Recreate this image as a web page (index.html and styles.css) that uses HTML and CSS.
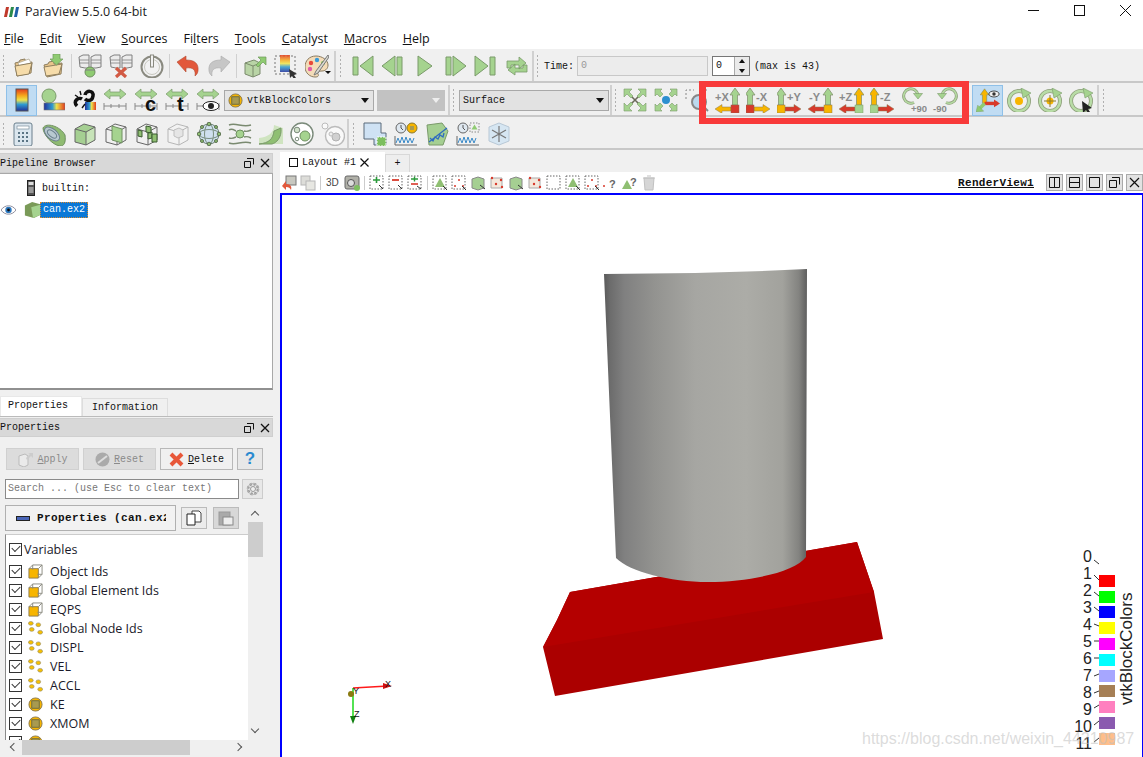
FILE: index.html
```html
<!DOCTYPE html>
<html lang="en">
<head>
<meta charset="utf-8">
<title>ParaView 5.5.0 64-bit</title>
<link rel="stylesheet" href="styles.css">
</head>
<body>
<svg class="defs" width="0" height="0" aria-hidden="true">
<defs>
<linearGradient id="rainbow" x1="0" y1="0" x2="0" y2="1"><stop offset="0" stop-color="#e23b1e"/><stop offset=".3" stop-color="#f6a81c"/><stop offset=".5" stop-color="#eee24a"/><stop offset=".7" stop-color="#2f9bd0"/><stop offset="1" stop-color="#20309a"/></linearGradient>
<linearGradient id="rainbowx" x1="0" y1="0" x2="1" y2="0"><stop offset="0" stop-color="#20309a"/><stop offset=".4" stop-color="#2f9bd0"/><stop offset=".6" stop-color="#eee24a"/><stop offset="1" stop-color="#e23b1e"/></linearGradient>
<linearGradient id="cyl" x1="0" y1="0" x2="1" y2="0"><stop offset="0" stop-color="#5a5a5a"/><stop offset=".03" stop-color="#6c6c6c"/><stop offset=".1" stop-color="#808080"/><stop offset=".25" stop-color="#939390"/><stop offset=".45" stop-color="#a6a6a2"/><stop offset=".7" stop-color="#acaca7"/><stop offset=".88" stop-color="#a2a29d"/><stop offset=".96" stop-color="#838380"/><stop offset="1" stop-color="#5e5e5e"/></linearGradient>
<polygon id="up" points="0,0 5,7 2.5,7 2.5,17 -2.5,17 -2.5,7 -5,7" stroke="#7d8a68" stroke-width=".7"/>
<polygon id="la" points="0,4.5 7,0 7,2.5 16,2.5 16,6.5 7,6.5 7,9" stroke="#8a7a50" stroke-width=".5"/>
<polygon id="ra" points="16,4.5 9,0 9,2.5 0,2.5 0,6.5 9,6.5 9,9" stroke="#8a7a50" stroke-width=".5"/>

<symbol id="folder" viewBox="0 0 24 24"><path d="M4 9l4-1 1-2 5-1v4l7-1-1 11-14 3z" fill="#e8c58c" stroke="#8f7f5f"/><path d="M7 9l11-4 2 4-12 3z" fill="#fff" stroke="#a9a08a" stroke-width=".7"/><path d="M4 12l17-3-3 11-12 2z" fill="#f6dcaa" stroke="#8f7f5f"/></symbol>
<symbol id="folderdl" viewBox="0 0 24 24"><path d="M2 11l4-1 1-2 5-1v3l8-1-1 11-14 3z" fill="#e8c58c" stroke="#8f7f5f"/><path d="M2 13l18-3-3 10-13 2z" fill="#f6dcaa" stroke="#8f7f5f"/><path d="M11 0h7v5h3l-6.500 6-6.500-6h3z" fill="#8fcb72" stroke="#6e9a5a" stroke-width=".7"/></symbol>
<symbol id="server" viewBox="0 0 24 24"><g fill="#ececec" stroke="#808080"><path d="M1 3l4-2h6v13H7l-5-1zM13 3l4-2h6v12l-5 1h-5z"/><path d="M1 6h10M1 9h10M13 6h10M13 9h10" stroke-width=".8"/></g><circle cx="12" cy="18" r="5" fill="#8fcb72" stroke="#6e8f60"/><path d="M7 16h10" stroke="#808080"/></symbol>
<symbol id="serverx" viewBox="0 0 24 24"><g fill="#ececec" stroke="#808080"><path d="M1 3l4-2h6v13H7l-5-1zM13 3l4-2h6v12l-5 1h-5z"/><path d="M1 6h10M1 9h10M13 6h10M13 9h10" stroke-width=".8"/></g><path d="M7 14l10 9M17 14L7 23" stroke="#d25a44" stroke-width="3.200"/></symbol>
<symbol id="power" viewBox="0 0 24 24"><circle cx="12" cy="13" r="10.500" fill="#f2f2f2" stroke="#8a8a80" stroke-width="2"/><circle cx="12" cy="13" r="7.500" fill="none" stroke="#c8c8c0" stroke-width="1"/><rect x="10.500" y="1" width="3" height="12" fill="#f2f2f2" stroke="#8a8a80"/></symbol>
<symbol id="undo" viewBox="0 0 24 24"><path d="M1 8l9-6v4c8 0 13 3 12 11-.5 3-2 4-3 5 1-6-2-9-9-8v4z" fill="#e2583b" stroke="#b04a30" stroke-width=".6"/></symbol>
<symbol id="redo" viewBox="0 0 24 24"><path d="M23 8l-9-6v4C6 6 1 9 2 17c.5 3 2 4 3 5-1-6 2-9 9-8v4z" fill="#c6c6c6" stroke="#a8a8a8" stroke-width=".6"/></symbol>
<symbol id="cubeup" viewBox="0 0 24 24"><path d="M2 9l9-3 6 3v11l-7 3-8-3z" fill="#b9d4a6" stroke="#7a8a6c"/><path d="M10 12v11M2 9l8 3 7-3" stroke="#7a8a6c" fill="none"/><path d="M13 11l5-5-3-3h8v8l-3-3-5 5z" fill="#8fcb72" stroke="#6e9a5a" stroke-width=".7"/></symbol>
<symbol id="colorsel" viewBox="0 0 24 24"><rect x="1" y="2" width="20" height="18" fill="none" stroke="#777" stroke-dasharray="2 2"/><rect x="6" y="1" width="10" height="17" fill="url(#rainbow)" opacity=".85"/><path d="M15 15l8 5-3 1 2 3-2 1-2-3-2 2z" fill="#333"/></symbol>
<symbol id="palette" viewBox="0 0 24 24"><path d="M11 2C4 2 0 7 0 13c0 6 5 10 10 10 3 0 4-1 3-3s1-3 4-3 6-2 6-6c0-5-6-9-12-9z" fill="#f4dcb8" stroke="#8a7a60"/><circle cx="6" cy="9" r="2.200" fill="#e8483a"/><circle cx="12" cy="6" r="2.200" fill="#3a9ad8"/><circle cx="5" cy="15" r="2.200" fill="#e05aa8"/><circle cx="18" cy="9" r="2" fill="#7ac050"/><path d="M23 1L11 17l-2 4 4-2L24 3z" fill="#d8d8d0" stroke="#777"/></symbol>

<symbol id="first" viewBox="0 0 24 24"><path d="M3 3h5v18H3zM23 2v20L10 12z" fill="#a5d38f" stroke="#7a9a6a"/></symbol>
<symbol id="prev" viewBox="0 0 24 24"><path d="M16 3h5v18h-5zM14 2v20L1 12z" fill="#a5d38f" stroke="#7a9a6a"/></symbol>
<symbol id="play" viewBox="0 0 24 24"><path d="M6 2v20l14-10z" fill="#a5d38f" stroke="#7a9a6a"/></symbol>
<symbol id="next" viewBox="0 0 24 24"><path d="M3 3h5v18H3zM10 2v20l13-10z" fill="#a5d38f" stroke="#7a9a6a"/></symbol>
<symbol id="last" viewBox="0 0 24 24"><path d="M16 3h5v18h-5zM1 2v20l13-10z" fill="#a5d38f" stroke="#7a9a6a"/></symbol>
<symbol id="loop" viewBox="0 0 24 24"><path d="M2 14V7h12V3l7 6-7 6v-4H6v3zM22 11v7H10v3l-7-5 7-6v4h8v-3z" fill="#a5d38f" stroke="#7a9a6a" stroke-width=".8"/></symbol>

<symbol id="bar" viewBox="0 0 24 24"><rect x="6" y="1" width="12" height="22" fill="url(#rainbow)" stroke="#555"/></symbol>
<symbol id="ballbar" viewBox="0 0 24 24"><circle cx="8" cy="8" r="7" fill="#a5d38f" stroke="#7a9a6a"/><rect x="3" y="15" width="21" height="7" fill="url(#rainbowx)" stroke="#777" stroke-width=".6"/></symbol>
<symbol id="brk" viewBox="0 0 24 24"><path d="M5 18c-5-5 2-9 5-7M13 7c1-5 9-5 8 1s-6 5-8 3" fill="none" stroke="#111" stroke-width="3.500"/><rect x="13" y="14" width="11" height="8" fill="url(#rainbowx)"/><path d="M3 7l3 2M8 3l1 4M10 20l3-4" stroke="#111" stroke-width="1.400"/></symbol>
<g id="rs"><path d="M1 6l6-5v3h10V1l6 5-6 5V8H7v3z" fill="#a5d38f" stroke="#7a9a6a" stroke-width=".7"/><path d="M1 15v7M23 15v7M1 18h22M8 16v4M16 16v4" stroke="#888" fill="none"/></g>
<symbol id="rescale" viewBox="0 0 24 24"><use href="#rs"/></symbol>
<symbol id="rescc" viewBox="0 0 24 24"><use href="#rs"/><text class="sv-big" x="11" y="23">c</text></symbol>
<symbol id="resct" viewBox="0 0 24 24"><use href="#rs"/><text class="sv-big" x="12" y="23">t</text></symbol>
<symbol id="resce" viewBox="0 0 24 24"><use href="#rs"/><ellipse cx="15" cy="18" rx="8" ry="4.500" fill="#fff" stroke="#222"/><circle cx="15" cy="18" r="3" fill="#222"/></symbol>

<symbol id="calc" viewBox="0 0 24 24"><rect x="3" y="1" width="18" height="23" rx="2" fill="#dbe6ee" stroke="#6a7f8c"/><rect x="6" y="4" width="12" height="3" fill="#fff" stroke="#6a7f8c" stroke-width=".6"/><path d="M7 10h2v2H7zM11 10h2v2h-2zM15 10h2v2h-2zM7 14h2v2H7zM11 14h2v2h-2zM15 14h2v2h-2zM7 18h2v2H7zM11 18h2v2h-2zM15 18h2v2h-2z" fill="#5a7484"/></symbol>
<symbol id="contour" viewBox="0 0 24 24"><path d="M1 6C4 0 18 4 23 13c1 8-1 11-5 11C10 23 1 12 1 6z" fill="#8fbb72" stroke="#6e8f60"/><ellipse cx="10" cy="12" rx="9" ry="5" transform="rotate(40 10 12)" fill="#b8c9d0" stroke="#6a7f8c"/><ellipse cx="10" cy="12" rx="5.500" ry="2.800" transform="rotate(40 10 12)" fill="none" stroke="#6a7f8c"/></symbol>
<g id="cube"><path d="M2 7l9-5 11 3v13l-9 5-11-3zM2 7l11 3v13M13 10l9-5" fill="none" stroke="#666"/></g>
<symbol id="clip" viewBox="0 0 24 24"><path d="M2 7l9-5 11 3v13l-9 5-11-3z" fill="#a5cf92"/><path d="M13 10l9-5v13l-9 5z" fill="#c7e3b8"/><use href="#cube"/></symbol>
<symbol id="slice" viewBox="0 0 24 24"><use href="#cube"/><path d="M8 4l10 3v14L8 18z" fill="#a5d38f" stroke="#6e8f60"/></symbol>
<symbol id="thresh" viewBox="0 0 24 24"><use href="#cube"/><path d="M3 8l4 1v6l-4-1zM13 11l4-1v6l-4 1zM11 4l5 1v6l-5-1z" fill="#8fbf72" stroke="#3a5a30"/><path d="M17 12h5v8h-5z" fill="#8fbf72" stroke="#3a5a30"/></symbol>
<symbol id="extract" viewBox="0 0 24 24" opacity=".55"><path d="M2 7l9-5 11 3v13l-9 5-11-3zM2 7l11 3v13M13 10l9-5" fill="#f5f5f5" stroke="#888"/><path d="M8 8l5-2 4 2v6l-5 2-4-2z" fill="#ddd" stroke="#999"/></symbol>
<symbol id="glyph" viewBox="0 0 24 24"><circle cx="12" cy="12" r="10" fill="#cfe0ef" stroke="#6a7f70"/><ellipse cx="12" cy="12" rx="4.500" ry="10" fill="none" stroke="#7a8f80"/><ellipse cx="12" cy="12" rx="10" ry="4.500" fill="none" stroke="#7a8f80"/><g fill="#8fbf72" stroke="#5a7050"><circle cx="12" cy="2" r="1.800"/><circle cx="12" cy="22" r="1.800"/><circle cx="2" cy="12" r="1.800"/><circle cx="22" cy="12" r="1.800"/><circle cx="5" cy="5" r="1.500"/><circle cx="19" cy="5" r="1.500"/><circle cx="5" cy="19" r="1.500"/><circle cx="19" cy="19" r="1.500"/></g></symbol>
<symbol id="stream" viewBox="0 0 24 24"><path d="M1 3c7-3 13 3 22 0M1 8c3-2 5 0 7 1M16 9c3 1 5 0 7-1M1 16c3 1 5 0 7-1M16 15c3-1 5 0 7 1M1 21c7 3 13-3 22 0" fill="none" stroke="#7a8a70" stroke-width="1.400"/><circle cx="12" cy="12" r="4" fill="#a5d38f" stroke="#6e8f60"/></symbol>
<symbol id="warp" viewBox="0 0 24 24"><path d="M0 22h24V6L15 3C15 11 9 15 0 16z" fill="#cfe4c0"/><path d="M0 22c10-1 14-5 15-13l7-3c1 10-5 15-9 16z" fill="#8fbf72" stroke="#7a9a6a"/></symbol>
<symbol id="group" viewBox="0 0 24 24"><circle cx="12" cy="12" r="11" fill="#fff" stroke="#7a8a7a" stroke-width="1.400"/><circle cx="15" cy="14" r="5" fill="#a5d38f" stroke="#6e8f60"/><circle cx="7" cy="8" r="2.800" fill="#cfe0c8" stroke="#7a8a7a"/><circle cx="7" cy="17" r="1.800" fill="#fff" stroke="#7a8a7a"/></symbol>
<symbol id="groupx" viewBox="0 0 24 24" opacity=".6"><circle cx="14" cy="14" r="9.500" fill="#fff" stroke="#999" stroke-width="1.400"/><circle cx="15" cy="15" r="4" fill="#bbb" stroke="#888"/><circle cx="10" cy="12" r="2" fill="#eee" stroke="#999"/><circle cx="4" cy="4" r="3" fill="#fff" stroke="#999"/></symbol>
<symbol id="selbox" viewBox="0 0 24 24"><path d="M1 1h17v10h5v12H11v-6H1z" fill="#cfe2f4" stroke="#5a6a7a"/><rect x="14" y="15" width="9" height="9" fill="#7dbf5f" stroke="#fff" stroke-dasharray="2 1"/></symbol>
<symbol id="plot1" viewBox="0 0 24 24"><circle cx="7" cy="6" r="5" fill="#dfe8f0" stroke="#666"/><path d="M7 3v3l2 2" stroke="#555" fill="none"/><circle cx="18" cy="6" r="5" fill="#f7b500" stroke="#8a7a30"/><rect x="16" y="4" width="4" height="4" fill="#a89a50"/><path d="M2 21l2-5 2 5 2-6 2 6 2-6 2 6 2-5 2 5 2-5" stroke="#3a8ac8" fill="none"/><path d="M1 14v9h22" stroke="#666" fill="none"/></symbol>
<symbol id="plot2" viewBox="0 0 24 24"><path d="M2 3l15-2 6 8-5 14-14 0z" fill="#a5cf92" stroke="#7a9a6a"/><path d="M4 20L22 6M5 16l3 3 2-4 3 2 2-4 3 2 1-4" stroke="#2e6bc0" fill="none" stroke-width="1.300"/></symbol>
<symbol id="plot3" viewBox="0 0 24 24"><circle cx="7" cy="6" r="5" fill="#dfe8f0" stroke="#666"/><path d="M7 3v3l2 2" stroke="#555" fill="none"/><rect x="14" y="1" width="9" height="9" fill="none" stroke="#888" stroke-dasharray="1.500 1.500"/><path d="M18.500 2.500l3 5h-6z" fill="#8fcb72"/><path d="M2 21l2-5 2 5 2-6 2 6 2-6 2 6 2-5 2 5 2-5" stroke="#3a8ac8" fill="none"/><path d="M1 14v9h22" stroke="#666" fill="none"/></symbol>
<symbol id="hexa" viewBox="0 0 24 24"><path d="M12 1l10 4v14l-10 4-10-4V5z" fill="#d6e6f2" stroke="#b8c8d6"/><path d="M12 4v16M5 8l14 8M19 8L5 16" stroke="#777" stroke-width="1.200"/></symbol>

<symbol id="fit" viewBox="0 0 24 24"><path d="M3 3l18 18M21 3L3 21" stroke="#6a6a5a" stroke-width="1.600"/><path d="M1 1h8L6 4l4 4-2 2-4-4-3 3zM23 1h-8l3 3-4 4 2 2 4-4 3 3zM1 23h8l-3-3 4-4-2-2-4 4-3-3zM23 23h-8l3-3-4-4 2-2 4 4 3-3z" fill="#a5d38f" stroke="#7a9a6a" stroke-width=".6"/></symbol>
<symbol id="center" viewBox="0 0 24 24"><circle cx="12" cy="12" r="4" fill="#2b8fd0"/><path d="M1 1h7L6 3l3 3-3 3-3-3-2 2zM23 1h-7l2 2-3 3 3 3 3-3 2 2zM1 23h7l-2-2 3-3-3-3-3 3-2-2zM23 23h-7l2-2-3-3 3-3 3 3 2-2z" fill="#a5d38f" stroke="#7a9a6a" stroke-width=".6"/></symbol>
<symbol id="zoombox" viewBox="0 0 24 24"><path d="M1 11V2h8M16 2h6" fill="none" stroke="#888" stroke-dasharray="2 2"/><circle cx="14" cy="14" r="7" fill="#bcd9ee" stroke="#888" stroke-width="2"/><path d="M19 19l4 4" stroke="#888" stroke-width="2"/></symbol>

<symbol id="orient" viewBox="0 0 28 28"><use href="#up" x="10" y="1" fill="#f7b500"/><path d="M10 18h15" stroke="#d8392b" stroke-width="4"/><path d="M28 18l-7-4.500v9z" fill="#d8392b"/><path d="M10 18l-7 7" stroke="#8fcb72" stroke-width="4"/><path d="M0 28l9-1-7-7z" fill="#8fcb72" stroke="#7a9a6a" stroke-width=".5"/><ellipse cx="21" cy="7" rx="6" ry="3.500" fill="#eee" stroke="#333"/><circle cx="21" cy="7" r="2" fill="#333"/></symbol>
<g id="rring"><circle cx="12" cy="13" r="10" fill="none" stroke="#8d9d7a" stroke-width="4"/><circle cx="12" cy="13" r="10" fill="none" stroke="#b8dca6" stroke-width="2.400"/><path d="M14 0l10 5-8 5z" fill="#a5d38f" stroke="#7a9a6a" stroke-width=".6"/></g>
<symbol id="rot1" viewBox="0 0 24 24"><use href="#rring"/><circle cx="12" cy="13" r="4" fill="#f7b500"/></symbol>
<symbol id="rot2" viewBox="0 0 24 24"><use href="#rring"/><circle cx="12" cy="13" r="3.500" fill="#f7b500"/><path d="M12 7v12M6 13h12" stroke="#8a7a30"/></symbol>
<symbol id="rot3" viewBox="0 0 24 24"><use href="#rring"/><path d="M13 13l10 7-4 1 2 3-2 1-2-3-3 3z" fill="#222"/></symbol>

<symbol id="eye" viewBox="0 0 16 10"><path d="M0 5c4-6 12-6 16 0-4 6-12 6-16 0z" fill="#fff" stroke="#889"/><circle cx="8" cy="5" r="3.400" fill="#2b78c0"/><circle cx="8" cy="5" r="1.500" fill="#111"/></symbol>
<symbol id="pc" viewBox="0 0 8 16"><rect x=".5" y=".5" width="7" height="15" fill="#555" stroke="#222"/><rect x="1.500" y="2" width="5" height="3" fill="#ddd"/><rect x="1.500" y="7" width="5" height="6" fill="#999"/></symbol>
<symbol id="gcube" viewBox="0 0 20 20"><path d="M1 5l8-4 10 3v11l-8 4-10-3z" fill="#7a9a58"/><path d="M8 7l11-3v11l-9 4z" fill="#a5d38f"/></symbol>
<symbol id="ycube" viewBox="0 0 16 16"><path d="M1 5h10v10H1z" fill="#f7b500" stroke="#8a7a50"/><path d="M1 5l4-4h10v10l-4 4M11 5l4-4M5 1v10h10" fill="none" stroke="#8a8a80"/><path d="M2 6h8v8H2z" fill="#f7b500"/></symbol>
<symbol id="ypts" viewBox="0 0 16 16"><g fill="#f7c000" stroke="#99906a" stroke-width=".7"><ellipse cx="3" cy="2.500" rx="2.500" ry="2"/><ellipse cx="11" cy="4" rx="2.500" ry="2"/><ellipse cx="4" cy="9" rx="2.500" ry="2"/><ellipse cx="13" cy="12" rx="2.500" ry="2"/></g></symbol>
<symbol id="ycell" viewBox="0 0 16 16"><circle cx="8" cy="8" r="7" fill="#f7b500" stroke="#8a7a50"/><rect x="4" y="4" width="8" height="8" fill="#a89a50" stroke="#6a6a40"/></symbol>

<symbol id="v-sel" viewBox="0 0 16 16"><rect x="1" y="1" width="13" height="13" fill="none" stroke="#666" stroke-dasharray="1.500 1.500"/></symbol>
<symbol id="v-tri" viewBox="0 0 16 16"><rect x="1" y="1" width="13" height="13" fill="none" stroke="#666" stroke-dasharray="1.500 1.500"/><path d="M8 3l5 9H3z" fill="#8fbf72"/><path d="M11 11l4 4" stroke="#333"/></symbol>
<symbol id="v-trp" viewBox="0 0 16 16"><rect x="1" y="1" width="13" height="13" fill="none" stroke="#666" stroke-dasharray="1.500 1.500"/><circle cx="8" cy="5" r="1" fill="#d8392b"/><circle cx="4" cy="11" r="1" fill="#d8392b"/><circle cx="12" cy="11" r="1" fill="#d8392b"/><path d="M11 11l4 4" stroke="#333"/></symbol>
<symbol id="v-blk" viewBox="0 0 16 16"><path d="M2 4l6-2 6 2v9l-6 2-6-2z" fill="#a5cf92" stroke="#888"/><path d="M10 10l5 4" stroke="#333"/></symbol>
<symbol id="v-pts" viewBox="0 0 16 16"><path d="M2 3h11v10H2z" fill="#f4e8dc" stroke="#aaa"/><g fill="#d8392b"><circle cx="3" cy="3" r="1.200"/><circle cx="12" cy="5" r="1.200"/><circle cx="7" cy="9" r="1.200"/><circle cx="13" cy="12" r="1.200"/></g></symbol>
<symbol id="v-add" viewBox="0 0 16 16"><rect x="1" y="1" width="13" height="13" fill="none" stroke="#666" stroke-dasharray="1.500 1.500"/><path d="M4 5h7M7.500 2v6" stroke="#2a9a3a" stroke-width="1.600"/><path d="M10 10l4 4" stroke="#333"/></symbol>
<symbol id="v-sub" viewBox="0 0 16 16"><rect x="1" y="1" width="13" height="13" fill="none" stroke="#666" stroke-dasharray="1.500 1.500"/><path d="M4 5h7" stroke="#d8392b" stroke-width="1.800"/><path d="M10 10l4 4" stroke="#333"/></symbol>
<symbol id="v-tog" viewBox="0 0 16 16"><rect x="1" y="1" width="13" height="13" fill="none" stroke="#666" stroke-dasharray="1.500 1.500"/><path d="M4 4h7M7.500 1.500v5" stroke="#2a9a3a" stroke-width="1.400"/><path d="M4 9h7" stroke="#d8392b" stroke-width="1.600"/><path d="M10 11l4 3" stroke="#333"/></symbol>
<symbol id="v-cam" viewBox="0 0 16 16"><rect x="1" y="1" width="14" height="13" rx="2" fill="#b0b0a8" stroke="#666"/><circle cx="7" cy="8" r="3.500" fill="#ddd" stroke="#555"/><circle cx="13" cy="13" r="3" fill="#7dbf5f"/></symbol>
<symbol id="v-und" viewBox="0 0 16 16"><rect x="5" y="1" width="10" height="9" fill="#c8c8c0" stroke="#777"/><path d="M1 11l4-5v3c5 0 6 3 5 6-1-2-2-3-5-3v3z" fill="#e2583b"/></symbol>
<symbol id="v-red" viewBox="0 0 16 16" opacity=".6"><rect x="1" y="1" width="9" height="9" fill="#c8c8c0" stroke="#888"/><rect x="6" y="6" width="9" height="9" fill="#d8d8d0" stroke="#888"/></symbol>
<symbol id="v-trash" viewBox="0 0 16 16" opacity=".6"><path d="M3 3h10l-1 12H4z" fill="#bbb" stroke="#999"/><path d="M2 3h12M6 1h4" stroke="#999"/></symbol>
<symbol id="v-tq" viewBox="0 0 16 16"><circle cx="1" cy="11" r="1" fill="#d8392b"/><text class="sv-q" x="6" y="13">?</text></symbol>
<symbol id="v-tq2" viewBox="0 0 16 16"><path d="M5 5l5 9H0z" fill="#8fbf72"/><text class="sv-q" x="8" y="11">?</text></symbol>
<symbol id="gear" viewBox="0 0 16 16"><circle cx="8" cy="8" r="5" fill="none" stroke="#999" stroke-width="2.600" stroke-dasharray="2.500 1.400"/><circle cx="8" cy="8" r="5.500" fill="none" stroke="#bbb"/><circle cx="8" cy="8" r="2.500" fill="#f0f0f0" stroke="#999"/></symbol>
<symbol id="copy" viewBox="0 0 16 16"><path d="M6 1h7l2 2v9H6z" fill="#fff" stroke="#444"/><path d="M1 4h8v11H1z" fill="#fff" stroke="#222"/></symbol>
<symbol id="paste" viewBox="0 0 16 16"><rect x="1" y="2" width="11" height="13" fill="#aaa" stroke="#999"/><rect x="5" y="7" width="10" height="8" fill="#eee" stroke="#888"/></symbol>
<symbol id="applyi" viewBox="0 0 16 16"><path d="M2 5l6-2 3 2v9l-4 2-5-2z" fill="#eaeaea" stroke="#bbb"/><path d="M9 7l4-4-2-1h5v5l-2-2-4 4z" fill="#ccc"/></symbol>
</defs>
</svg>

<div class="app">
  <header class="titlebar">
    <svg class="logo" width="15" height="10" viewBox="0 0 15 10" aria-hidden="true"><path d="M2 0h3L3 10H0z" fill="#c0392b"/><path d="M7 0h3L8 10H5z" fill="#2a8a4a"/><path d="M12 0h3l-2 10h-3z" fill="#2060a8"/></svg>
    <span class="title-text">ParaView 5.5.0 64-bit</span>
    <div class="winctl">
      <span class="wbtn"><svg width="11" height="11" viewBox="0 0 11 11"><path d="M0 5.500h11" stroke="#111"/></svg></span>
      <span class="wbtn"><svg width="11" height="11" viewBox="0 0 11 11"><rect x=".5" y=".5" width="10" height="10" fill="none" stroke="#111"/></svg></span>
      <span class="wbtn"><svg width="11" height="11" viewBox="0 0 11 11"><path d="M0 0l11 11M11 0L0 11" stroke="#111"/></svg></span>
    </div>
  </header>

  <nav class="menubar">
    <span><u>F</u>ile</span><span><u>E</u>dit</span><span><u>V</u>iew</span><span><u>S</u>ources</span><span>Fi<u>l</u>ters</span><span><u>T</u>ools</span><span><u>C</u>atalyst</span><span><u>M</u>acros</span><span><u>H</u>elp</span>
  </nav>

  <div class="tb tb1">
    <div class="grp g1a"><i class="grip"></i>
      <span class="b"><svg><use href="#folder"/></svg></span><span class="b"><svg><use href="#folderdl"/></svg></span><i class="sep"></i>
      <span class="b"><svg><use href="#server"/></svg></span><span class="b"><svg><use href="#serverx"/></svg></span><span class="b"><svg><use href="#power"/></svg></span><i class="sep"></i>
      <span class="b"><svg><use href="#undo"/></svg></span><span class="b"><svg><use href="#redo"/></svg></span><i class="sep"></i>
      <span class="b"><svg><use href="#cubeup"/></svg></span><span class="b"><svg><use href="#colorsel"/></svg></span><span class="b"><svg><use href="#palette"/></svg><i class="dd"></i></span>
    </div>
    <div class="grp g1b"><i class="grip"></i>
      <span class="b"><svg><use href="#first"/></svg></span><span class="b"><svg><use href="#prev"/></svg></span><span class="b"><svg><use href="#play"/></svg></span><span class="b"><svg><use href="#next"/></svg></span><span class="b"><svg><use href="#last"/></svg></span><span class="b"><svg><use href="#loop"/></svg></span>
    </div>
    <div class="grp g1c"><i class="grip"></i>
      <span class="mono time-label">Time:</span>
      <span class="time-input mono">0</span>
      <span class="spin mono">0<span class="spinbtn"><i class="up"></i><i class="down"></i></span></span>
      <span class="mono maxis">(max is 43)</span>
    </div>
  </div>

  <div class="tb tb2">
    <div class="grp g2a"><i class="gap6"></i>
      <span class="b active"><svg><use href="#bar"/></svg></span><span class="b"><svg><use href="#ballbar"/></svg></span><span class="b"><svg><use href="#brk"/></svg></span><span class="b"><svg><use href="#rescale"/></svg></span><span class="b"><svg><use href="#rescc"/></svg></span><span class="b"><svg><use href="#resct"/></svg></span><span class="b"><svg><use href="#resce"/></svg></span>
      <span class="combo mono c1"><svg class="cicon" width="15" height="15"><use href="#ycell"/></svg>vtkBlockColors<i class="arrow"></i></span>
      <span class="combo c2"><i class="arrow light"></i></span>
    </div>
    <div class="grp g2b"><i class="grip"></i>
      <span class="combo mono c3">Surface<i class="arrow"></i></span>
    </div>
    <div class="grp g2c"><i class="grip"></i>
      <span class="b"><svg><use href="#fit"/></svg></span><span class="b"><svg><use href="#center"/></svg></span><span class="b"><svg><use href="#zoombox"/></svg></span>
      <span class="b"><svg class="ax" viewBox="0 0 25 25"><text class="axt" x="0" y="12.500">+X</text><use href="#up" x="20" fill="#a5d38f"/><use href="#la" y="16.500" fill="#f7b500"/><rect x="16" y="17" width="8" height="8" fill="#d8392b" stroke="#8a6a50" stroke-width=".5"/></svg></span>
      <span class="b"><svg class="ax" viewBox="0 0 25 25"><text class="axt" x="10" y="12.500">-X</text><use href="#up" x="4" fill="#a5d38f"/><use href="#ra" x="8" y="16.500" fill="#f7b500"/><rect x="0" y="17" width="8" height="8" fill="#d8392b" stroke="#8a6a50" stroke-width=".5"/></svg></span>
      <span class="b"><svg class="ax" viewBox="0 0 25 25"><text class="axt" x="10" y="12.500">+Y</text><use href="#up" x="4" fill="#a5d38f"/><use href="#ra" x="8" y="16.500" fill="#d8392b"/><rect x="0" y="17" width="8" height="8" fill="#f7b500" stroke="#8a7a50" stroke-width=".5"/></svg></span>
      <span class="b"><svg class="ax" viewBox="0 0 25 25"><text class="axt" x="1" y="12.500">-Y</text><use href="#up" x="20" fill="#a5d38f"/><use href="#la" y="16.500" fill="#d8392b"/><rect x="16" y="17" width="8" height="8" fill="#f7b500" stroke="#8a7a50" stroke-width=".5"/></svg></span>
      <span class="b"><svg class="ax" viewBox="0 0 25 25"><text class="axt" x="0" y="12.500">+Z</text><use href="#up" x="20" fill="#f7b500"/><use href="#la" y="16.500" fill="#d8392b"/><rect x="16" y="17" width="8" height="8" fill="#a5d38f" stroke="#7a9a6a" stroke-width=".5"/></svg></span>
      <span class="b"><svg class="ax" viewBox="0 0 25 25"><text class="axt" x="10" y="12.500">-Z</text><use href="#up" x="4" fill="#f7b500"/><use href="#ra" x="8" y="16.500" fill="#d8392b"/><rect x="0" y="17" width="8" height="8" fill="#a5d38f" stroke="#7a9a6a" stroke-width=".5"/></svg></span>
      <span class="b"><svg class="ax wide" viewBox="0 0 26 26"><path d="M13 15.500A7.200 7.200 0 1 1 17 8" fill="none" stroke="#8d9d7a" stroke-width="3"/><path d="M13 15.500A7.200 7.200 0 1 1 17 8" fill="none" stroke="#b5dba2" stroke-width="1.600"/><path d="M12.500 6.500h9L17 12z" fill="#a5d38f" stroke="#7a9a6a" stroke-width=".6"/><text class="axt small" x="10" y="25">+90</text></svg></span>
      <span class="b"><svg class="ax wide" viewBox="0 0 26 26"><path d="M14 15.500A7.200 7.200 0 1 0 10 8" fill="none" stroke="#8d9d7a" stroke-width="3"/><path d="M14 15.500A7.200 7.200 0 1 0 10 8" fill="none" stroke="#b5dba2" stroke-width="1.600"/><path d="M5.500 6.500h9L10 12z" fill="#a5d38f" stroke="#7a9a6a" stroke-width=".6"/><text class="axt small" x="1" y="25">-90</text></svg></span>
      <i class="sep wide14"></i>
      <span class="b active"><svg><use href="#orient"/></svg></span><span class="b"><svg><use href="#rot1"/></svg></span><span class="b"><svg><use href="#rot2"/></svg></span><span class="b"><svg><use href="#rot3"/></svg></span>
    </div>
    <i class="grip g-end"></i>
  </div>

  <div class="tb tb3">
    <div class="grp g3a"><i class="grip"></i>
      <span class="b"><svg><use href="#calc"/></svg></span><span class="b"><svg><use href="#contour"/></svg></span><span class="b"><svg><use href="#clip"/></svg></span><span class="b"><svg><use href="#slice"/></svg></span><span class="b"><svg><use href="#thresh"/></svg></span><span class="b"><svg><use href="#extract"/></svg></span><span class="b"><svg><use href="#glyph"/></svg></span><span class="b"><svg><use href="#stream"/></svg></span><span class="b"><svg><use href="#warp"/></svg></span><span class="b"><svg><use href="#group"/></svg></span><span class="b"><svg><use href="#groupx"/></svg></span>
    </div>
    <div class="grp g3b"><i class="grip"></i>
      <span class="b"><svg><use href="#selbox"/></svg></span><span class="b"><svg><use href="#plot1"/></svg></span><span class="b"><svg><use href="#plot2"/></svg></span><span class="b"><svg><use href="#plot3"/></svg></span><span class="b"><svg><use href="#hexa"/></svg></span>
    </div>
  </div>

  <main class="main">
    <aside class="left">
      <div class="dock-title mono"><span>Pipeline Browser</span><span class="dock-btns"><svg width="10" height="10" viewBox="0 0 10 10"><path d="M3 .5h6.500v6M.5 3.500h6v6h-6z" fill="none" stroke="#111"/></svg><svg width="10" height="10" viewBox="0 0 10 10"><path d="M1 1l8 8M9 1L1 9" stroke="#111" stroke-width="1.300"/></svg></span></div>
      <div class="tree">
        <div class="tree-row r1 mono"><svg class="pc" width="8" height="16"><use href="#pc"/></svg>builtin:</div>
        <div class="tree-row r2 mono"><svg class="eye" width="15" height="10"><use href="#eye"/></svg><svg class="gc" width="20" height="18"><use href="#gcube"/></svg><span class="sel">can.ex2</span></div>
      </div>
      <div class="tabs mono"><span class="tab on">Properties</span><span class="tab">Information</span></div>
      <div class="dock-title t2 mono"><span>Properties</span><span class="dock-btns"><svg width="10" height="10" viewBox="0 0 10 10"><path d="M3 .5h6.500v6M.5 3.500h6v6h-6z" fill="none" stroke="#111"/></svg><svg width="10" height="10" viewBox="0 0 10 10"><path d="M1 1l8 8M9 1L1 9" stroke="#111" stroke-width="1.300"/></svg></span></div>
      <div class="actions mono">
        <span class="btn dis"><svg width="16" height="16"><use href="#applyi"/></svg><span><u>A</u>pply</span></span>
        <span class="btn dis"><svg width="15" height="15" viewBox="0 0 15 15"><circle cx="7.500" cy="7.500" r="7" fill="#aaa"/><path d="M3 11L12 4" stroke="#ddd" stroke-width="2"/></svg><span><u>R</u>eset</span></span>
        <span class="btn"><svg width="15" height="15" viewBox="0 0 15 15"><path d="M2 2l11 11M13 2L2 13" stroke="#e8583a" stroke-width="4"/></svg><span><u>D</u>elete</span></span>
        <span class="btn help">?</span>
      </div>
      <div class="searchrow mono"><span class="search">Search ... (use Esc to clear text)</span><span class="gearbtn"><svg width="16" height="16"><use href="#gear"/></svg></span></div>
      <div class="scrollarea">
        <div class="content">
          <div class="prophead mono">
            <span class="propbtn"><i class="dash"></i><b>Properties (can.ex2)</b></span>
            <span class="sq"><svg width="16" height="16"><use href="#copy"/></svg></span>
            <span class="sq dim"><svg width="16" height="16"><use href="#paste"/></svg></span>
          </div>
          <div class="list">
            <div class="row head"><i class="cb"></i>Variables</div>
            <div class="row"><i class="cb"></i><svg width="15" height="15"><use href="#ycube"/></svg>Object Ids</div>
            <div class="row"><i class="cb"></i><svg width="15" height="15"><use href="#ycube"/></svg>Global Element Ids</div>
            <div class="row"><i class="cb"></i><svg width="15" height="15"><use href="#ycube"/></svg>EQPS</div>
            <div class="row"><i class="cb"></i><svg width="15" height="15"><use href="#ypts"/></svg>Global Node Ids</div>
            <div class="row"><i class="cb"></i><svg width="15" height="15"><use href="#ypts"/></svg>DISPL</div>
            <div class="row"><i class="cb"></i><svg width="15" height="15"><use href="#ypts"/></svg>VEL</div>
            <div class="row"><i class="cb"></i><svg width="15" height="15"><use href="#ypts"/></svg>ACCL</div>
            <div class="row"><i class="cb"></i><svg width="15" height="15"><use href="#ycell"/></svg>KE</div>
            <div class="row"><i class="cb"></i><svg width="15" height="15"><use href="#ycell"/></svg>XMOM</div>
            <div class="row"><i class="cb"></i><svg width="15" height="15"><use href="#ycell"/></svg></div>
          </div>
        </div>
        <div class="vscroll"><i class="chev-up"></i><i class="vthumb"></i><i class="chev-down"></i></div>
      </div>
      <div class="hscroll"><i class="chev-left"></i><i class="hthumb"></i><i class="chev-right"></i></div>
    </aside>

    <section class="right">
      <div class="layout-tabs mono">
        <span class="ltab on"><i class="sqicon"></i>Layout #1<svg width="9" height="9" viewBox="0 0 9 9"><path d="M.5.5l8 8M8.500.5l-8 8" stroke="#111" stroke-width="1.200"/></svg></span>
        <span class="ltab plus">+</span>
      </div>
      <div class="viewbar">
        <svg width="16" height="16"><use href="#v-und"/></svg><svg width="16" height="16"><use href="#v-red"/></svg><i class="vsep"></i>
        <span class="t3d">3D</span><svg class="after3d" width="16" height="16"><use href="#v-cam"/></svg><i class="vsep"></i>
        <svg width="16" height="16"><use href="#v-add"/></svg><svg width="16" height="16"><use href="#v-sub"/></svg><svg width="16" height="16"><use href="#v-tog"/></svg><i class="vsep"></i>
        <svg width="16" height="16"><use href="#v-tri"/></svg><svg width="16" height="16"><use href="#v-trp"/></svg><svg width="16" height="16"><use href="#v-blk"/></svg><svg width="16" height="16"><use href="#v-pts"/></svg><svg width="16" height="16"><use href="#v-blk"/></svg><svg width="16" height="16"><use href="#v-pts"/></svg><svg width="16" height="16"><use href="#v-sel"/></svg><svg width="16" height="16"><use href="#v-tri"/></svg><svg width="16" height="16"><use href="#v-trp"/></svg><svg width="16" height="16"><use href="#v-tq"/></svg><svg width="16" height="16"><use href="#v-tq2"/></svg><svg width="16" height="16"><use href="#v-trash"/></svg>
        <span class="rv mono">RenderView1</span>
        <span class="vb"><svg width="11" height="11" viewBox="0 0 11 11"><path d="M.5.5h10v10H.5zM5.500.5v10" fill="none" stroke="#111"/></svg></span>
        <span class="vb"><svg width="11" height="11" viewBox="0 0 11 11"><path d="M.5.5h10v10H.5zM.5 5.500h10" fill="none" stroke="#111"/></svg></span>
        <span class="vb"><svg width="11" height="11" viewBox="0 0 11 11"><path d="M.5.500h10v10H.5z" fill="none" stroke="#111"/></svg></span>
        <span class="vb"><svg width="11" height="11" viewBox="0 0 11 11"><path d="M3 .5h7.500v7M.5 3.500h7v7h-7z" fill="none" stroke="#111"/></svg></span>
        <span class="vb"><svg width="11" height="11" viewBox="0 0 11 11"><path d="M1 1l9 9M10 1l-9 9" stroke="#111" stroke-width="1.200"/></svg></span>
      </div>
      <div class="viewport">
        <svg class="scene" viewBox="282 195 860 562" width="860" height="562">
          <polygon points="570,592 857,542 874,592 883,639 555,696 543,647 557,620" fill="#ab0000"/>
          <polygon points="570,592 857,542 874,592 543,647 557,620" fill="#b40000"/>
          <path d="M604 274Q705 274 807 269L806 557C795 572 750 582 708 582C670 582 630 572 616 558Z" fill="url(#cyl)"/>
          <path d="M353 688L388 686" stroke="#ff1a1a" stroke-width="1.500"/><path d="M392 686l-9-3v6z" fill="#d01010"/>
          <path d="M353 688V720" stroke="#1ad81a" stroke-width="1.500"/><path d="M353 724l-3-8h6z" fill="#108010"/>
          <circle cx="351" cy="694" r="3" fill="#8a7a10"/>
          <text class="axl" x="385" y="687">X</text><text class="axl" x="353" y="694">Y</text><text class="axl" x="354" y="717">Z</text>
          <g class="leg">
            <rect x="1099" y="575" width="16" height="12" fill="#ff0000"/><rect x="1099" y="591" width="16" height="12" fill="#00ff00"/><rect x="1099" y="606" width="16" height="12" fill="#0000ff"/><rect x="1099" y="622" width="16" height="12" fill="#ffff00"/><rect x="1099" y="638" width="16" height="12" fill="#ff00ff"/><rect x="1099" y="654" width="16" height="12" fill="#00ffff"/><rect x="1099" y="670" width="16" height="12" fill="#a6a6ff"/><rect x="1099" y="685" width="16" height="12" fill="#a67f55"/><rect x="1099" y="701" width="16" height="12" fill="#ff7fbf"/><rect x="1099" y="717" width="16" height="12" fill="#8a5aaf"/><rect x="1099" y="733" width="16" height="12" fill="#ffbe8a"/>
            <path d="M1094 560l5 4M1094 575l5 5M1094 592l5 4M1094 607l5 4M1094 624l5 2M1094 641h5M1094 658h5M1094 676l5-2M1094 693l5-2M1094 708l5-3M1094 725l5-4M1094 742l5-4" stroke="#333" fill="none"/>
            <text x="1092" y="562">0</text><text x="1092" y="579">1</text><text x="1092" y="596">2</text><text x="1092" y="613">3</text><text x="1092" y="630">4</text><text x="1092" y="647">5</text><text x="1092" y="664">6</text><text x="1092" y="681">7</text><text x="1092" y="698">8</text><text x="1092" y="715">9</text><text x="1092" y="732">10</text><text x="1092" y="749">11</text>
          </g>
          <text class="legt" transform="translate(1132 705) rotate(-90)">vtkBlockColors</text>
        </svg>
      </div>
    </section>
  </main>

  <div class="redbox"></div>
  <div class="watermark">https://blog.csdn.net/weixin_44210987</div>
</div>
</body>
</html>
```

FILE: styles.css
```css
* { box-sizing: border-box; }
html, body { margin: 0; padding: 0; }
body { width: 1143px; height: 757px; overflow: hidden; font-family: "Open Sans", "Liberation Sans", sans-serif; }
.defs { position: absolute; }
i { display: block; font-style: normal; }
svg { display: block; flex: none; }
.mono { font-family: "Liberation Mono", "DejaVu Sans Mono", monospace; font-size: 10px; color: #111; }

.app { position: relative; width: 1143px; height: 757px; background: #f0f0f0; display: flex; flex-direction: column; overflow: hidden; }

.titlebar { height: 30px; background: #fff; display: flex; align-items: center; padding-left: 4px; flex: none; }
.logo { margin-right: 6px; margin-top: -6px; }
.title-text { font-size: 12.5px; color: #222; margin-top: -8px; }
.winctl { margin-left: auto; margin-right: -5px; display: flex; margin-top: -10px; }
.wbtn { width: 46px; height: 20px; display: flex; align-items: center; justify-content: center; }

.menubar { height: 19px; background: #fff; display: flex; gap: 16px; padding: 0 0 2px 4px; font-size: 12.5px; color: #111; align-items: center; flex: none; }

.tb { display: flex; align-items: center; border-bottom: 2px solid #c8c8c8; padding-top: 2px; flex: none; }
.tb1 { height: 34px; }
.tb2 { height: 34px; }
.tb3 { height: 33px; }

.grp { display: flex; align-items: center; height: 100%; border-right: 2px solid #d0d0d0; }
.g1a { width: 336px; }
.g1b { width: 198px; }
.g1c { border-right: 0; }
.g2a { width: 450px; }
.g2b { width: 162px; }
.g2c { width: 487px; }
.g3a { width: 349px; }
.g3b { border-right: 0; }

.grip { width: 3px; height: 24px; margin: 0 2px; flex: none; background-image: radial-gradient(circle, #b0b0b0 1px, transparent 1px); background-size: 3px 4px; }
.g1b .grip, .g3b .grip { margin: 0 4px 0 3px; }
.g2b .grip { margin: 0 2px 0 2px; }
.g2c .grip { margin: 0 2px 0 2px; }
.g-end { margin-left: 3px; }
.gap6 { width: 6px; flex: none; }
.b { width: 31px; height: 31px; flex: none; display: flex; align-items: center; justify-content: center; position: relative; }
.b svg { width: 24px; height: 24px; }
.b svg.ax { width: 25px; height: 25px; }
.b svg.ax.wide { width: 26px; height: 26px; }
.b.active { background: #c0dcf3; border: 1px solid #8fc0e8; }
.sep { width: 1px; height: 24px; margin: 0 2px; background: #d0d0d0; flex: none; }
.sep.wide14 { width: 12px; background: none; margin: 0; }
.dd { position: absolute; right: 1px; bottom: 5px; border: 3px solid transparent; border-top: 3px solid #111; }

.time-label { margin: 0 3px 0 3px; }
.time-input { width: 131px; height: 20px; background: #ececec; border: 1px solid #c8c8c8; color: #999; padding: 3px 3px; margin-right: 4px; }
.spin { width: 38px; height: 20px; background: #fff; border: 1px solid #777; padding: 3px 3px; display: block; position: relative; margin-right: 4px; }
.spinbtn { position: absolute; right: 0; top: 0; width: 15px; height: 18px; background: #eaeaea; border-left: 1px solid #aaa; }
.spinbtn .up { position: absolute; left: 4px; top: 2px; border: 3px solid transparent; border-top: 0; border-bottom: 4px solid #111; }
.spinbtn .down { position: absolute; left: 4px; bottom: 2px; border: 3px solid transparent; border-bottom: 0; border-top: 4px solid #111; }

.combo { height: 21px; background: #e2e2e2; border: 1px solid #a8a8a8; display: flex; align-items: center; position: relative; flex: none; padding-left: 3px; }
.c1 { width: 150px; margin-left: 1px; background: #e4e4e4; }
.cicon { margin-right: 4px; }
.c2 { width: 68px; margin-left: 3px; background: #c2c2c2; border-color: #c2c2c2; }
.c3 { width: 150px; margin-left: 2px; }
.arrow { position: absolute; right: 4px; top: 7px; border: 4px solid transparent; border-top: 5px solid #111; border-bottom: 0; }
.arrow.light { border-top-color: #eee; }

.main { flex: 1; display: flex; min-height: 0; }
.left { width: 280px; flex: none; padding-top: 3px; display: flex; flex-direction: column; }
.dock-title { width: 273px; height: 20px; background: #d8d8d8; border: 1px solid #cfcfcf; display: flex; align-items: center; justify-content: space-between; padding: 0 2px 0 0; border-left: 0; flex: none; }
.dock-btns { display: flex; gap: 6px; }
.tree { width: 273px; height: 217px; background: #fff; border: 1px solid #a8a8a8; border-bottom: 2px solid #909090; border-left: 0; flex: none; padding-top: 3px; }
.tree-row { height: 22px; display: flex; align-items: center; }
.r1 { padding-left: 27px; font-size: 10px; }
.pc { margin-right: 7px; }
.eye { margin-left: 1px; margin-right: 7px; }
.gc { margin-right: -3px; }
.sel { background: #0a78d7; color: #fff; padding: 2px 3px; outline: 1px dotted #d98a30; outline-offset: -1px; height: 16px; line-height: 12px; }

.tabs { display: flex; height: 21px; margin-top: 6px; border-bottom: 1px solid #bbb; width: 273px; flex: none; align-items: flex-end; }
.tab { height: 18px; padding: 3px 8px 0; background: #f0f0f0; border: 1px solid #ddd; border-bottom: 0; width: 86px; text-align: center; }
.tab.on { background: #fff; height: 20px; width: 82px; padding: 3px 0 0 7px; border-color: #e8e8e8; text-align: left; }
.t2 { margin-top: 1px; height: 19px; }
.actions { display: flex; gap: 4px; padding: 11px 0 0 6px; flex: none; }
.btn { width: 73px; height: 22px; border: 1px solid #b8b8b8; background: #f0f0f0; display: flex; align-items: center; justify-content: center; gap: 4px; color: #111; }
.btn.dis { background: #dcdcdc; color: #8a8a8a; border-color: #d0d0d0; }
.btn.help { width: 26px; font: bold 17px "Liberation Sans", sans-serif; color: #2a8ad0; background: #e8e8e8; }
.searchrow { display: flex; gap: 3px; padding: 9px 0 0 5px; flex: none; }
.search { width: 234px; height: 20px; background: #fff; border: 1px solid #8a8a8a; color: #777; padding: 3px 2px; white-space: pre; }
.gearbtn { width: 21px; height: 20px; background: #e8e8e8; border: 1px solid #ccc; display: flex; align-items: center; justify-content: center; }

.scrollarea { display: flex; width: 263px; flex: none; height: 235px; margin-top: 6px; padding-left: 5px; }
.content { width: 243px; flex: none; }
.prophead { display: flex; height: 26px; align-items: center; }
.propbtn { width: 171px; height: 26px; border: 1px solid #b0b0b0; background: #f2f2f2; display: flex; align-items: center; white-space: nowrap; padding-left: 10px; flex: none; }
.propbtn b { font-weight: 700; font-size: 11px; letter-spacing: .4px; width: 129px; overflow: hidden; flex: none; }
.dash { width: 14px; height: 5px; background: #4a66b8; border: 1px solid #222; margin-right: 7px; flex: none; }
.sq { width: 26px; height: 22px; border: 1px solid #bbb; background: #ececec; display: flex; align-items: center; justify-content: center; margin-left: 5px; flex: none; }
.sq.dim { background: #d8d8d8; margin-left: 6px; }
.list { background: #fff; border-left: 1px solid #8a8a8a; border-top: 1px solid #ccc; margin-top: 3px; height: 206px; overflow: hidden; padding-top: 2px; font-size: 12.5px; color: #1a1a2a; }
.row { height: 19px; display: flex; align-items: center; white-space: nowrap; padding-left: 3px; }
.row svg { margin-right: 7px; }
.row.head { height: 25px; }
.cb { width: 13px; height: 13px; border: 1px solid #333; background: #fff; position: relative; margin-right: 6px; flex: none; }
.cb::after { content: ""; position: absolute; left: 2px; top: 1px; width: 7px; height: 4px; border-left: 1px solid #333; border-bottom: 1px solid #333; transform: rotate(-45deg); }
.row.head .cb { margin-right: 2px; }

.vscroll { width: 15px; position: relative; flex: none; }
.vthumb { position: absolute; left: 0; top: 17px; width: 15px; height: 35px; background: #cdcdcd; }
.chev-up, .chev-down, .chev-left, .chev-right { position: absolute; width: 6px; height: 6px; border-top: 1.500px solid #555; border-left: 1.500px solid #555; }
.chev-up { left: 4px; top: 7px; transform: rotate(45deg); }
.chev-down { left: 4px; bottom: 8px; transform: rotate(225deg); }
.hscroll { position: relative; height: 15px; width: 248px; flex: none; }
.hthumb { position: absolute; left: 22px; top: 0; width: 168px; height: 15px; background: #cdcdcd; }
.chev-left { left: 11px; top: 4px; transform: rotate(-45deg); }
.chev-right { left: 235px; top: 4px; transform: rotate(135deg); }

.right { flex: 1; min-width: 0; display: flex; flex-direction: column; }
.layout-tabs { height: 22px; display: flex; align-items: flex-end; flex: none; padding-top: 2px; }
.ltab { height: 20px; background: #fff; width: 105px; display: flex; align-items: center; flex: none; padding-left: 9px; gap: 4px; }
.ltab.plus { width: 25px; height: 18px; background: #eee; border: 1px solid #d8d8d8; border-bottom: 0; justify-content: center; padding: 0; }
.sqicon { width: 9px; height: 9px; border: 1px solid #111; }
.viewbar { height: 21px; background: #fff; display: flex; align-items: center; gap: 3px; flex: none; padding-left: 1px; }
.vsep { width: 1px; height: 14px; background: #ccc; margin: 0 1px; flex: none; }
.t3d { font: 10px "Liberation Sans", sans-serif; color: #444; margin-left: 1px; width: 13px; }
.after3d { margin-left: 2px; }
.rv { font-weight: 700; text-decoration: underline; margin-left: auto; margin-right: 9px; font-size: 11px; letter-spacing: .3px; }
.vb { width: 17px; height: 17px; background: #e2e2e2; border: 1px solid #aaa; display: flex; align-items: center; justify-content: center; flex: none; }
.viewport { flex: 1; background: #fff; border: 2px solid #0000ff; border-right-width: 1px; border-bottom: 0; min-height: 0; overflow: hidden; }
.axl { font: 9px "Liberation Sans", sans-serif; fill: #111; }
.leg text { font: 16px "Liberation Sans", sans-serif; fill: #222; text-anchor: end; }
.legt { font: 17px "Liberation Sans", sans-serif; fill: #222; }

.sv-big { font: bold 20px "Liberation Sans", sans-serif; fill: #111; }
.sv-q { font: bold 11px "Liberation Sans", sans-serif; fill: #666; }
.axt { font: bold 11px "Liberation Sans", sans-serif; fill: #8a8a8a; }
.axt.small { font-size: 9.500px; }

.redbox { position: absolute; left: 699px; top: 81px; width: 270px; height: 43px; border: 6px solid #f83a3a; border-left-width: 7px; border-right-width: 7px; pointer-events: none; }
.watermark { position: absolute; left: 862px; top: 730px; font: 16px "Liberation Sans", sans-serif; color: rgba(190,190,190,.55); white-space: nowrap; pointer-events: none; }
```
